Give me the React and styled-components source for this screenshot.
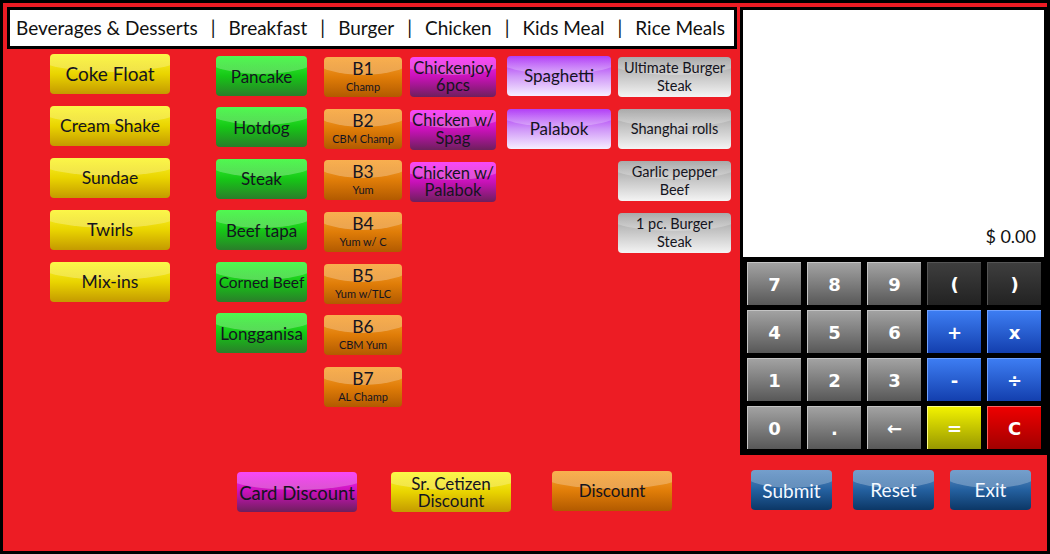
import React from 'react';
import styled, { createGlobalStyle } from 'styled-components';

const GlobalStyle = createGlobalStyle`
  html, body {
    margin: 0;
    padding: 0;
    background: #ed1c24;
  }
  * {
    box-sizing: border-box;
  }
`;

const palette = {
  yellow: ['#fbf52a', '#e9d400', '#c49a00'],
  green: ['#33f833', '#16c716', '#2a7e2a'],
  orange: ['#f8a232', '#e07d08', '#b25a00'],
  magenta: ['#f82af8', '#c811b8', '#6e1f5c'],
  lavender: ['#a51ef5', '#cf95f8', '#f6efff'],
  gray: ['#9c9c9c', '#c8c8c8', '#f4f4f4'],
  blue: ['#5e8fc4', '#24609f', '#0c3766'],
};

const Frame = styled.div`
  width: 1050px;
  height: 554px;
  border: 3px solid #000;
  background: #ed1c24;
  display: grid;
  grid-template-columns: 730px 307px;
  grid-template-rows: 448px auto;
  column-gap: 3px;
  padding: 4px 0 0 4px;
  font-family: Lato, "Liberation Sans", sans-serif;
  overflow: hidden;
`;

const LeftSide = styled.div`
  display: flex;
  flex-direction: column;
`;

const Nav = styled.nav`
  height: 42px;
  border: 3px solid #000;
  background: #fff;
  display: flex;
  align-items: center;
  padding: 0 0 1px 6px;
  gap: 13px;
  font-size: 19px;
  color: #111;
  white-space: nowrap;
`;

const NavLink = styled.span`
  white-space: nowrap;
`;

const Sep = styled.span`
  color: #111;
`;

const Menu = styled.div`
  display: flex;
  align-items: flex-start;
`;

const Column = styled.div`
  display: flex;
  flex-direction: column;
  width: ${p => p.$w}px;
  margin-left: ${p => p.$ml}px;
  padding-top: ${p => p.$top}px;
  gap: ${p => p.$gap}px;
`;

const Glossy = styled.button`
  position: relative;
  width: ${p => (p.$w ? `${p.$w}px` : '100%')};
  height: 40px;
  border: none;
  border-radius: 4px;
  padding: ${p => (p.$pt ? `${p.$pt}px 0 0` : '0')};
  cursor: pointer;
  overflow: hidden;
  font-family: Lato, "Liberation Sans", sans-serif;
  font-size: ${p => p.$fs || 17}px;
  line-height: ${p => p.$lh || 1.1};
  color: ${p => (p.$light ? '#f4f8ff' : '#141420')};
  background: linear-gradient(
    to bottom,
    ${p => palette[p.$c][0]} 0%,
    ${p => palette[p.$c][1]} 50%,
    ${p => palette[p.$c][2]} 100%
  );
  display: flex;
  flex-direction: column;
  align-items: center;
  justify-content: center;
  white-space: nowrap;
  &::before {
    content: '';
    position: absolute;
    left: -10%;
    right: -10%;
    top: -30%;
    height: 75%;
    border-radius: 0 0 50% 50%;
    background: linear-gradient(to bottom, rgba(255, 255, 255, 0.05), rgba(255, 255, 255, 0.28));
    pointer-events: none;
  }
  span {
    position: relative;
    white-space: nowrap;
  }
`;

const BigLabel = styled.span`
  font-size: 17.5px;
  line-height: 20px;
`;

const SmallLabel = styled.span`
  font-size: 11px;
  line-height: 16px;
`;

const Panel = styled.div`
  border: 3px solid #000;
  background: #000;
  display: flex;
  flex-direction: column;
`;

const Display = styled.div`
  height: 247px;
  background: #fff;
  display: flex;
  align-items: flex-end;
  justify-content: flex-end;
  padding: 0 8px 10px 0;
  font-size: 18px;
  color: #111;
`;

const Keypad = styled.div`
  display: grid;
  grid-template-columns: repeat(5, 54px);
  grid-auto-rows: 43px;
  column-gap: 6px;
  row-gap: 5px;
  padding: 5px 0 0 4px;
`;

const keyColors = {
  num: ['#a2a2a2', '#585858', '#c4c4c4'],
  dark: ['#3e3e3e', '#222222', '#555555'],
  blue: ['#3d7df2', '#133fae', '#6fa0ff'],
  yellow: ['#f2f200', '#989800', '#ffff80'],
  red: ['#ee0000', '#a20000', '#ff6060'],
};

const Key = styled.button`
  border: none;
  border-top: 1px solid ${p => keyColors[p.$k][2]};
  border-left: 1px solid ${p => keyColors[p.$k][2]};
  padding: 0;
  background: linear-gradient(to bottom, ${p => keyColors[p.$k][0]}, ${p => keyColors[p.$k][1]});
  color: #fff;
  font-family: "DejaVu Sans", sans-serif;
  font-weight: bold;
  font-size: 18px;
  cursor: pointer;
`;

const BottomRow = styled.div`
  display: flex;
  align-items: flex-start;
  padding-top: ${p => p.$top}px;
`;

const Spaced = styled.div`
  margin-left: ${p => p.$ml}px;
  margin-top: ${p => p.$mt || 0}px;
`;

const yellowItems = [
  { t: 'Coke Float', fs: 19 },
  { t: 'Cream Shake', fs: 17.5 },
  { t: 'Sundae', fs: 17.5 },
  { t: 'Twirls', fs: 18 },
  { t: 'Mix-ins', fs: 17.5 },
];

const greenItems = ['Pancake', 'Hotdog', 'Steak', 'Beef tapa', 'Corned Beef', 'Longganisa'];

const burgerItems = [
  ['B1', 'Champ'],
  ['B2', 'CBM Champ'],
  ['B3', 'Yum'],
  ['B4', 'Yum w/ C'],
  ['B5', 'Yum w/TLC'],
  ['B6', 'CBM Yum'],
  ['B7', 'AL Champ'],
];

const chickenItems = [
  ['Chickenjoy', '6pcs'],
  ['Chicken w/', 'Spag'],
  ['Chicken w/', 'Palabok'],
];

const kidsItems = ['Spaghetti', 'Palabok'];

const riceItems = [
  ['Ultimate Burger', 'Steak'],
  ['Shanghai rolls'],
  ['Garlic pepper', 'Beef'],
  ['1 pc. Burger', 'Steak'],
];

const keys = [
  ['7', 'num'], ['8', 'num'], ['9', 'num'], ['(', 'dark'], [')', 'dark'],
  ['4', 'num'], ['5', 'num'], ['6', 'num'], ['+', 'blue'], ['x', 'blue'],
  ['1', 'num'], ['2', 'num'], ['3', 'num'], ['-', 'blue'], ['÷', 'blue'],
  ['0', 'num'], ['.', 'num'], ['←', 'num'], ['=', 'yellow'], ['C', 'red'],
];

const categories = ['Beverages & Desserts', 'Breakfast', 'Burger', 'Chicken', 'Kids Meal', 'Rice Meals'];

function Lines({ lines }) {
  return lines.map(l => <span key={l}>{l}</span>);
}

export default function App() {
  return (
    <>
      <GlobalStyle />
      <Frame>
        <LeftSide>
          <Nav>
            {categories.map((c, i) => (
              <React.Fragment key={c}>
                {i > 0 && <Sep>|</Sep>}
                <NavLink>{c}</NavLink>
              </React.Fragment>
            ))}
          </Nav>
          <Menu>
            <Column $w={120} $ml={43} $top={5} $gap={12}>
              {yellowItems.map(it => (
                <Glossy key={it.t} $c="yellow" $fs={it.fs}><span>{it.t}</span></Glossy>
              ))}
            </Column>
            <Column $w={91} $ml={46} $top={7} $gap={11.4}>
              {greenItems.map(t => (
                <Glossy key={t} $c="green" $pt={2} $fs={t === 'Corned Beef' ? 15.5 : 17}><span>{t}</span></Glossy>
              ))}
            </Column>
            <Column $w={78} $ml={17} $top={8} $gap={11.67}>
              {burgerItems.map(([b, s]) => (
                <Glossy key={b} $c="orange">
                  <BigLabel>{b}</BigLabel>
                  <SmallLabel>{s}</SmallLabel>
                </Glossy>
              ))}
            </Column>
            <Column $w={86} $ml={8} $top={8} $gap={12.5}>
              {chickenItems.map(l => (
                <Glossy key={l.join()} $c="magenta" $fs={16.5} $lh={1.05}><Lines lines={l} /></Glossy>
              ))}
            </Column>
            <Column $w={104} $ml={11} $top={7} $gap={13}>
              {kidsItems.map(t => (
                <Glossy key={t} $c="lavender"><span>{t}</span></Glossy>
              ))}
            </Column>
            <Column $w={113} $ml={7} $top={8} $gap={12}>
              {riceItems.map(l => (
                <Glossy key={l.join()} $c="gray" $fs={14.5} $lh={1.25}><Lines lines={l} /></Glossy>
              ))}
            </Column>
          </Menu>
        </LeftSide>

        <Panel>
          <Display>$ 0.00</Display>
          <Keypad>
            {keys.map(([k, t]) => (
              <Key key={k} $k={t}>{k}</Key>
            ))}
          </Keypad>
        </Panel>

        <BottomRow $top={17}>
          <Spaced $ml={230}>
            <Glossy $c="magenta" $w={120} $fs={18.5} $pt={2}><span>Card Discount</span></Glossy>
          </Spaced>
          <Spaced $ml={34}>
            <Glossy $c="yellow" $w={120} $lh={1}><Lines lines={['Sr. Cetizen', 'Discount']} /></Glossy>
          </Spaced>
          <Spaced $ml={41} $mt={-1}>
            <Glossy $c="orange" $w={120}><span>Discount</span></Glossy>
          </Spaced>
        </BottomRow>

        <BottomRow $top={15}>
          <Spaced $ml={11}>
            <Glossy $c="blue" $w={81} $fs={19} $pt={2} $light><span>Submit</span></Glossy>
          </Spaced>
          <Spaced $ml={21}>
            <Glossy $c="blue" $w={81} $fs={19} $light><span>Reset</span></Glossy>
          </Spaced>
          <Spaced $ml={16}>
            <Glossy $c="blue" $w={81} $fs={19} $light><span>Exit</span></Glossy>
          </Spaced>
        </BottomRow>
      </Frame>
    </>
  );
}
